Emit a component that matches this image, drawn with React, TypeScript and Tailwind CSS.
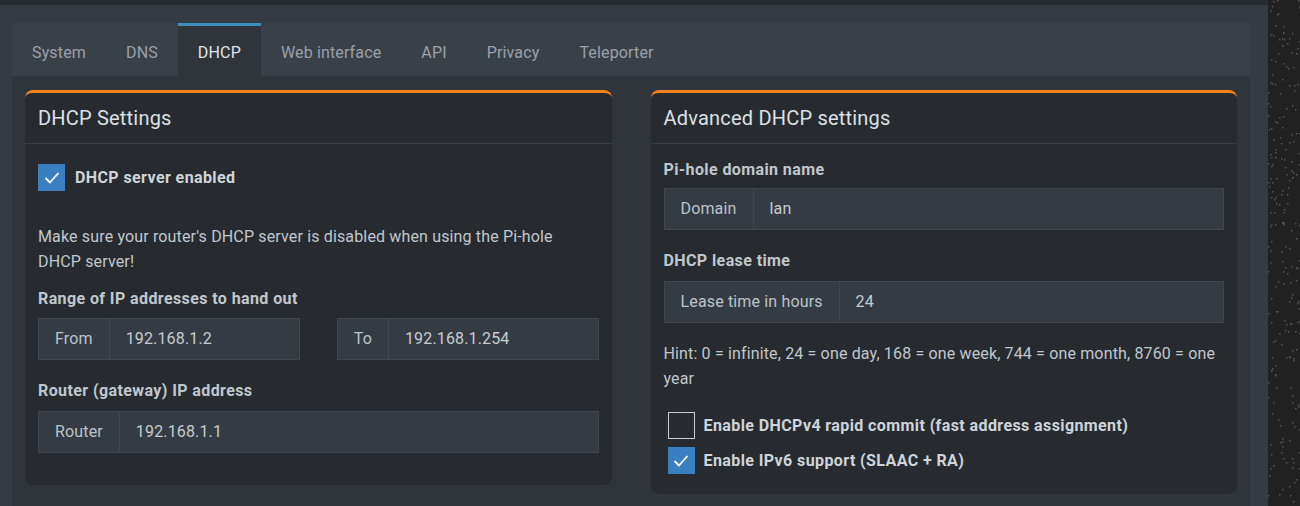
import React from 'react'

const font = { fontFamily: 'Roboto, "Noto Sans", sans-serif' }

const tabs = ['System', 'DNS', 'DHCP', 'Web interface', 'API', 'Privacy', 'Teleporter']

function Check({ checked }: { checked: boolean }) {
  if (!checked) {
    return <span className="block w-[27px] h-[27px] shrink-0 border border-[#c8cdd1] bg-[#272b30]" />
  }
  return (
    <span className="flex items-center justify-center w-[27px] h-[27px] shrink-0 bg-[#3a7fc1]">
      <svg width="18" height="18" viewBox="0 0 18 18" fill="none">
        <polyline points="3,9.5 7,13.5 15,4.5" stroke="#fff" strokeWidth="1.8" strokeLinecap="round" strokeLinejoin="round" />
      </svg>
    </span>
  )
}

function InputGroup({ addon, value, className = '' }: { addon: string; value: string; className?: string }) {
  return (
    <div className={`flex h-[42px] border border-[#40474e] bg-[#353b42] text-[16px] ${className}`}>
      <span className="flex items-center px-[16px] border-r border-[#40474e] text-[#bcc3c9] whitespace-nowrap">{addon}</span>
      <span className="flex items-center flex-1 px-[16px] text-[#c6ccd1]">{value}</span>
    </div>
  )
}

function Card({ title, children, className = '' }: { title: string; children: React.ReactNode; className?: string }) {
  return (
    <div className={`rounded-[8px] border-t-[3px] border-[#f5821f] bg-[#272b30] ${className}`}>
      <div className="h-[51px] flex items-center px-[13px] border-b border-[#3a4047] text-[20px] tracking-[0.2px] text-[#dce0e4]">
        {title}
      </div>
      {children}
    </div>
  )
}

function Dots() {
  const dots: { x: number; y: number; c: string }[] = []
  let s = 7
  for (let i = 0; i < 220; i++) {
    s = (s * 9301 + 49297) % 233280
    const x = (s / 233280) * 32
    s = (s * 9301 + 49297) % 233280
    const y = (s / 233280) * 506
    s = (s * 9301 + 49297) % 233280
    dots.push({ x, y, c: s % 3 === 0 ? '#111' : '#555' })
  }
  return (
    <svg width="32" height="506" className="block">
      {dots.map((d, i) => (
        <rect key={i} x={Math.floor(d.x)} y={Math.floor(d.y)} width="1.5" height="1.5" fill={d.c} />
      ))}
    </svg>
  )
}

export default function App() {
  return (
    <div className="w-[1300px] h-[506px] flex overflow-hidden bg-[#353b42]" style={font}>
      <div className="flex-1 flex flex-col">
        <div className="h-[5px] bg-[#262b2f]" />
        <div className="pl-[12px] pr-[18px] pt-[18px]">
          <div className="flex h-[53px] bg-[#3a4048] text-[16px] tracking-[0.15px]">
            {tabs.map(t =>
              t === 'DHCP' ? (
                <div key={t} className="flex items-center px-[20px] pt-[3px] border-t-[3px] border-[#3c8dbc] bg-[#2f353b] text-[#e0e4e8]">
                  {t}
                </div>
              ) : (
                <div key={t} className="flex items-center px-[20px] pt-[6px] text-[#9aa1a8]">
                  {t}
                </div>
              )
            )}
          </div>
          <div className="bg-[#2f353b] px-[13px] pt-[14px] h-[430px] grid grid-cols-2 gap-[39px] items-start">
            <Card title="DHCP Settings" className="pb-[32px]">
              <div className="px-[13px] text-[16px] tracking-[0.15px] text-[#c0c7cd]">
                <label className="flex items-center gap-[10px] mt-[20px]">
                  <Check checked />
                  <span className="font-bold tracking-[0.4px] text-[#ced4d9]">DHCP server enabled</span>
                </label>
                <p className="mt-[33px] leading-[25px]">
                  Make sure your router's DHCP server is disabled when using the Pi-hole DHCP server!
                </p>
                <div className="mt-[13px] leading-[24px] font-bold tracking-[0.4px]">Range of IP addresses to hand out</div>
                <div className="mt-[7px] grid grid-cols-2 gap-[37px]">
                  <InputGroup addon="From" value="192.168.1.2" />
                  <InputGroup addon="To" value="192.168.1.254" />
                </div>
                <div className="mt-[19px] leading-[24px] font-bold tracking-[0.4px]">Router (gateway) IP address</div>
                <InputGroup addon="Router" value="192.168.1.1" className="mt-[8px]" />
              </div>
            </Card>
            <Card title="Advanced DHCP settings" className="pb-[20px]">
              <div className="px-[13px] text-[16px] tracking-[0.15px] text-[#c0c7cd]">
                <div className="mt-[14px] leading-[24px] font-bold tracking-[0.4px]">Pi-hole domain name</div>
                <InputGroup addon="Domain" value="lan" className="mt-[6px]" />
                <div className="mt-[19px] leading-[24px] font-bold tracking-[0.4px]">DHCP lease time</div>
                <InputGroup addon="Lease time in hours" value="24" className="mt-[8px]" />
                <p className="mt-[18px] leading-[25px]">
                  Hint: 0 = infinite, 24 = one day, 168 = one week, 744 = one month, 8760 = one year
                </p>
                <label className="flex items-center gap-[9px] mt-[21px] px-[4px]">
                  <Check checked={false} />
                  <span className="font-bold tracking-[0.4px] text-[#ced4d9]">Enable DHCPv4 rapid commit (fast address assignment)</span>
                </label>
                <label className="flex items-center gap-[9px] mt-[8px] px-[4px]">
                  <Check checked />
                  <span className="font-bold tracking-[0.4px] text-[#ced4d9]">Enable IPv6 support (SLAAC + RA)</span>
                </label>
              </div>
            </Card>
          </div>
        </div>
      </div>
      <div className="w-[32px] h-[506px] bg-[#212121] shrink-0">
        <Dots />
      </div>
    </div>
  )
}
